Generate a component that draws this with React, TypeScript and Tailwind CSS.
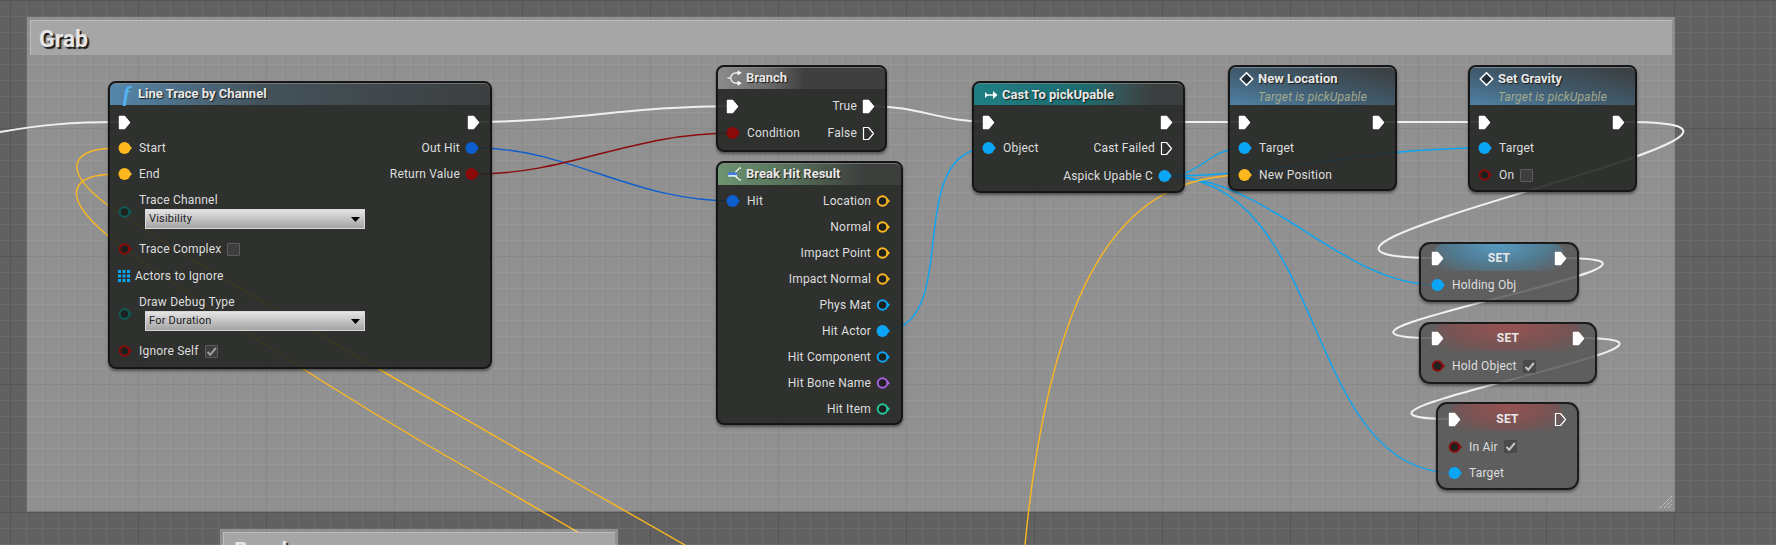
import React from 'react';

const BLUE = '#0aa5f5';
const YELLOW = '#fcb81e';
const RED = '#8c0a0a';
const TEAL = '#0b5c58';
const WIRE_BLUE = '#0d5fd0';

// exec pin, filled when connected
const ExecPin = ({ hollow = false }: { hollow?: boolean }) => (
  <svg width="13" height="15" viewBox="0 0 13 15" className="shrink-0">
    <path
      d="M1.5 1.5 H6.5 L11.5 7.5 L6.5 13.5 H1.5 Z"
      fill={hollow ? 'none' : '#fff'}
      stroke="#fff"
      strokeWidth={hollow ? 1.2 : 1.4}
      strokeLinejoin="round"
    />
  </svg>
);

const DataPin = ({ color, hollow = false }: { color: string; hollow?: boolean }) => (
  <svg width="15" height="14" viewBox="0 0 15 14" className="shrink-0">
    <path d="M12 5 L14 7 L12 9 Z" fill={color} />
    <circle cx="6.5" cy="7" r={hollow ? 4.8 : 6} fill={hollow ? '#1f211f' : color} stroke={hollow ? color : 'none'} strokeWidth={hollow ? 2 : 0} />
  </svg>
);

const CheckBox = ({ checked = false, flat = false }: { checked?: boolean; flat?: boolean }) => (
  <span
    className={`flex h-[13px] w-[13px] items-center justify-center rounded-[1px] border ${
      flat ? 'border-[#4a4a4a] bg-[#4a4a4a]' : 'border-[#5c5c5c] bg-[#3c3e3c]'
    }`}
  >
    {checked && (
      <svg width="11" height="11" viewBox="0 0 11 11">
        <path d="M1.5 6 L4.2 8.8 L9.8 2" fill="none" stroke={flat ? '#c8c8c8' : '#9c9c9c'} strokeWidth="2" />
      </svg>
    )}
  </span>
);

const Dropdown = ({ value }: { value: string }) => (
  <div className="ml-[6px] flex h-[20px] w-[220px] items-center justify-between border border-[#d8d8d8] bg-gradient-to-b from-[#e4e4e4] to-[#a4a4a4] pl-[3px] pr-[4px] text-[11px] text-[#1c1c1c]">
    <span>{value}</span>
    <svg width="9" height="5" viewBox="0 0 9 5">
      <path d="M0 0 H9 L4.5 5 Z" fill="#000" />
    </svg>
  </div>
);

const Row = ({ className, children }: { className: string; children: React.ReactNode }) => (
  <div className={`flex items-center justify-between text-[12px] tracking-[0.2px] text-[#dedede] ${className}`}>{children}</div>
);

const Left = ({ children }: { children: React.ReactNode }) => <div className="flex items-center gap-[6px]">{children}</div>;
const Right = ({ children }: { children: React.ReactNode }) => <div className="flex items-center gap-[5px]">{children}</div>;

const Node = ({
  className,
  header,
  title,
  subtitle,
  icon,
  bodyClass,
  children,
}: {
  className: string;
  header: string;
  title: string;
  subtitle?: string;
  icon: React.ReactNode;
  bodyClass: string;
  children: React.ReactNode;
}) => (
  <div className={`absolute rounded-[8px] border-2 border-[#141514] bg-[#212321]/[0.88] shadow-[0_2px_3px_rgba(0,0,0,0.45)] ${className}`}>
    <div className={`rounded-t-[6px] border-t border-[#8a8f92]/60 pl-[9px] ${header}`}>
      <div className="flex h-[20px] items-center gap-[4px]">
        <span className="flex w-[15px] justify-center">{icon}</span>
        <span className="text-[13px] font-bold text-[#e8e8e8] [text-shadow:1px_1px_1px_#1a1a1a]">{title}</span>
      </div>
      {subtitle && <div className="-mt-[1px] pl-[19px] text-[12px] italic tracking-[0.2px] text-[#a3a98a]">{subtitle}</div>}
    </div>
    <div className={`pl-[8px] pr-[10px] ${bodyClass}`}>{children}</div>
  </div>
);

const SetNode = ({
  className,
  glow,
  children,
}: {
  className: string;
  glow: string;
  children: React.ReactNode;
}) => (
  <div className={`absolute rounded-[11px] border-2 border-[#1b1b1b] bg-[#515151]/80 px-[10px] shadow-[0_2px_3px_rgba(0,0,0,0.4)] ${className}`}>
    <div className={`absolute inset-x-[14px] top-0 h-[27px] rounded-t-[8px] opacity-85 ${glow}`} />
    <div className="relative">{children}</div>
  </div>
);

const DiamondIcon = () => (
  <svg width="18" height="18" viewBox="0 0 18 18">
    <path d="M9 1.5 L16.5 9 L9 16.5 L1.5 9 Z" fill="#22303a" stroke="#fff" strokeWidth="2" strokeLinejoin="round" />
  </svg>
);

const BranchIcon = () => (
  <svg width="16" height="16" viewBox="0 0 16 16" fill="none" stroke="#fff" strokeWidth="1.3">
    <path d="M13 2.5 H9.5 A5.5 5.5 0 0 0 9.5 13.5 H13" />
    <path d="M0.5 8 H3.5" />
    <path d="M12 1 L14.5 2.5 L12 4 Z M12 12 L14.5 13.5 L12 15 Z" fill="#fff" />
  </svg>
);

const BreakIcon = () => (
  <svg width="16" height="16" viewBox="0 0 16 16" fill="none">
    <rect x="1" y="6" width="10" height="4.5" rx="2" fill="#3f7fe0" />
    <rect x="1" y="9" width="10" height="2" rx="1" fill="#d9e6f5" />
    <path d="M9 6 L13 2 M9 10.5 L13 14" stroke="#fff" strokeWidth="1.4" />
    <path d="M12 1 H15 V3 Z M12 15 H15 V13 Z" fill="#fff" />
  </svg>
);

const CastIcon = () => (
  <svg width="14" height="10" viewBox="0 0 14 10">
    <path d="M1 2 L4 5 L1 8 Z M9 1 L13.5 5 L9 9 Z" fill="#fff" />
    <path d="M3 5 H10" stroke="#fff" strokeWidth="1.4" />
  </svg>
);

const ArrayIcon = () => (
  <svg width="12" height="12" viewBox="0 0 12 12" fill={BLUE} className="shrink-0">
    <path d="M0 0h3v3H0z M4.5 0h3v3h-3z M9 0h3v3H9z M0 4.5h3v3H0z M4.5 4.5h3v3h-3z M9 4.5h3v3H9z M0 9h3v3H0z M4.5 9h3v3h-3z M9 9h3v3H9z" />
  </svg>
);

const Wires = () => (
  <svg className="absolute left-0 top-0" width="1776" height="545" fill="none" strokeLinecap="round">
    {/* exec */}
    <g stroke="#f0f0f0" strokeWidth="2">
      <path d="M0 132 C 40 125, 70 122, 120 122" />
      <path d="M476 122 C 570 122, 630 106, 734 106" />
      <path d="M869 106 C 920 106, 940 122, 989 122" />
      <path d="M1168 122 H1246" />
      <path d="M1380 122 H1486" />
      <path d="M1625 122 C 1885 122, 1177 258, 1437 258" />
      <path d="M1559 258 C 1749 258, 1247 338, 1437 338" />
      <path d="M1577 338 C 1763 338, 1268 419, 1454 419" />
    </g>
    {/* data */}
    <g strokeWidth="1.4">
      <path d="M476 148 C 570 148, 630 201, 734 201" stroke={WIRE_BLUE} />
      <path d="M476 174 C 570 174, 630 133, 734 133" stroke={RED} />
      <path d="M882 331 C 965 331, 900 148, 989 148" stroke={BLUE} />
      <path d="M1164 176 C 1205 176, 1205 148, 1246 148" stroke={BLUE} />
      <path d="M1164 176 C 1290 176, 1350 148, 1486 148" stroke={BLUE} />
      <path d="M1164 176 C 1270 176, 1340 285, 1437 285" stroke={BLUE} />
      <path d="M1164 176 C 1330 176, 1300 473, 1454 473" stroke={BLUE} />
      <path d="M1246 175 C 1150 175, 1055 230, 1025 545" stroke={YELLOW} />
      <path d="M118 148 C 70 148, 62 170, 105 203 C 190 262, 320 335, 571 480 L 685 545" stroke={YELLOW} />
      <path d="M118 174 C 70 174, 60 195, 107 235 C 180 290, 320 385, 488 480 L 600 545" stroke={YELLOW} />
    </g>
  </svg>
);

export default function App() {
  return (
    <div className="relative h-[545px] w-[1776px] overflow-hidden bg-[#616161] bg-[linear-gradient(to_right,#555555_1px,transparent_1px),linear-gradient(to_bottom,#555555_1px,transparent_1px),linear-gradient(to_right,#6a6a6a_1px,transparent_1px),linear-gradient(to_bottom,#6a6a6a_1px,transparent_1px)] bg-[size:128px_128px,128px_128px,16px_16px,16px_16px] bg-[position:10px_0,0_0,10px_0,0_0] font-['Roboto',sans-serif]">
      {/* Grab comment box */}
      <div className="absolute left-[27px] top-[17px] h-[495px] w-[1648px] border-b border-[#7a7a7a] bg-white/30 p-[3px]">
        <div className="h-[35px] w-[1642px] border-l border-t border-[#bdbdbd] bg-[#a6a6a6] pl-[8px] text-[23px] font-bold leading-[38px] text-[#e6e6e6] [text-shadow:2px_2px_1px_#1c1c1c]">
          Grab
        </div>
        <svg className="absolute bottom-[2px] right-[2px]" width="14" height="14" viewBox="0 0 14 14" stroke="#dcdcdc" strokeWidth="1" strokeDasharray="1 1">
          <path d="M1 13 L13 1 M5 13 L13 5 M9 13 L13 9" />
        </svg>
      </div>

      <Wires />

      {/* next comment box, cut off by the window */}
      <div className="absolute left-[220px] top-[529px] h-[40px] w-[398px] bg-white/30 p-[3px]">
        <div className="h-[35px] border-l border-t border-[#bdbdbd] bg-[#a6a6a6] pl-[10px] text-[23px] font-bold leading-[38px] text-[#e6e6e6] [text-shadow:2px_2px_1px_#1c1c1c]">
          Break
        </div>
      </div>

      <Node
        className="left-[108px] top-[81px] h-[288px] w-[384px]"
        header="h-[22px] bg-gradient-to-r from-[#5587ac] via-[#43525a] via-[40%] to-[#3d3f40]"
        title="Line Trace by Channel"
        icon={<span className="font-['Liberation_Serif',serif] text-[22px] font-bold italic leading-[20px] text-[#52b4f2]">f</span>}
        bodyClass="pt-[4px]"
      >
        <Row className="h-[26px]">
          <ExecPin />
          <ExecPin />
        </Row>
        <Row className="h-[26px]">
          <Left>
            <DataPin color={YELLOW} />
            Start
          </Left>
          <Right>
            Out Hit
            <DataPin color={WIRE_BLUE} />
          </Right>
        </Row>
        <Row className="h-[26px]">
          <Left>
            <DataPin color={YELLOW} />
            End
          </Left>
          <Right>
            Return Value
            <DataPin color={RED} />
          </Right>
        </Row>
        <Row className="h-[49px]">
          <Left>
            <DataPin color={TEAL} hollow />
            <div className="mb-[3px]">
              <div className="h-[18px] leading-[18px]">Trace Channel</div>
              <Dropdown value="Visibility" />
            </div>
          </Left>
        </Row>
        <Row className="h-[26px]">
          <Left>
            <DataPin color={RED} hollow />
            Trace Complex
            <CheckBox />
          </Left>
        </Row>
        <Row className="h-[27px]">
          <div className="flex items-center gap-[5px]">
            <ArrayIcon />
            Actors to Ignore
          </div>
        </Row>
        <Row className="h-[49px]">
          <Left>
            <DataPin color={TEAL} hollow />
            <div className="mb-[3px]">
              <div className="h-[18px] leading-[18px]">Draw Debug Type</div>
              <Dropdown value="For Duration" />
            </div>
          </Left>
        </Row>
        <Row className="h-[26px]">
          <Left>
            <DataPin color={RED} hollow />
            Ignore Self
            <CheckBox checked />
          </Left>
        </Row>
      </Node>

      <Node
        className="left-[716px] top-[65px] h-[87px] w-[171px]"
        header="h-[22px] bg-gradient-to-r from-[#8c8c8c] via-[#6a6a6a] via-[30%] to-[#3e3f3e] to-[52%]"
        title="Branch"
        icon={<BranchIcon />}
        bodyClass="pt-[4px]"
      >
        <Row className="h-[26px]">
          <ExecPin />
          <Right>
            True
            <ExecPin />
          </Right>
        </Row>
        <Row className="h-[28px]">
          <Left>
            <DataPin color={RED} />
            Condition
          </Left>
          <Right>
            False
            <ExecPin hollow />
          </Right>
        </Row>
      </Node>

      <Node
        className="left-[716px] top-[161px] h-[264px] w-[187px]"
        header="h-[22px] bg-gradient-to-r from-[#6c9470] via-[#56705a] via-[40%] to-[#3d3f3d] to-[80%]"
        title="Break Hit Result"
        icon={<BreakIcon />}
        bodyClass="pt-[3px]"
      >
        {[
          ['Location', YELLOW, true],
          ['Normal', YELLOW, true],
          ['Impact Point', YELLOW, true],
          ['Impact Normal', YELLOW, true],
          ['Phys Mat', BLUE, true],
          ['Hit Actor', BLUE, false],
          ['Hit Component', BLUE, true],
          ['Hit Bone Name', '#a45fe0', true],
          ['Hit Item', '#1fc79a', true],
        ].map(([label, color, hollow], i) => (
          <Row className="h-[26px]" key={label as string}>
            {i === 0 ? (
              <Left>
                <DataPin color={WIRE_BLUE} />
                Hit
              </Left>
            ) : (
              <span />
            )}
            <Right>
              {label as string}
              <DataPin color={color as string} hollow={hollow as boolean} />
            </Right>
          </Row>
        ))}
      </Node>

      <Node
        className="left-[972px] top-[81px] h-[112px] w-[213px]"
        header="h-[22px] pt-[1px] bg-gradient-to-r from-[#1f7f84] via-[#1d6a6e] via-[55%] to-[#3b3f3f] to-[85%]"
        title="Cast To pickUpable"
        icon={<CastIcon />}
        bodyClass="pt-[4px]"
      >
        <Row className="h-[26px]">
          <ExecPin />
          <ExecPin />
        </Row>
        <Row className="h-[26px]">
          <Left>
            <DataPin color={BLUE} />
            Object
          </Left>
          <Right>
            Cast Failed
            <ExecPin hollow />
          </Right>
        </Row>
        <Row className="h-[30px]">
          <span />
          <Right>
            Aspick Upable C
            <DataPin color={BLUE} />
          </Right>
        </Row>
      </Node>

      <Node
        className="left-[1228px] top-[65px] h-[126px] w-[169px]"
        header="h-[38px] pt-[1px] bg-gradient-to-tr from-[#4f81a6] via-[#40596a] via-[50%] to-[#3b3d3e]"
        title="New Location"
        subtitle="Target is pickUpable"
        icon={<DiamondIcon />}
        bodyClass="pt-[4px]"
      >
        <Row className="h-[26px]">
          <ExecPin />
          <ExecPin />
        </Row>
        <Row className="h-[26px]">
          <Left>
            <DataPin color={BLUE} />
            Target
          </Left>
        </Row>
        <Row className="h-[28px]">
          <Left>
            <DataPin color={YELLOW} />
            New Position
          </Left>
        </Row>
      </Node>

      <Node
        className="left-[1468px] top-[65px] h-[127px] w-[169px]"
        header="h-[38px] pt-[1px] bg-gradient-to-tr from-[#4f81a6] via-[#40596a] via-[50%] to-[#3b3d3e]"
        title="Set Gravity"
        subtitle="Target is pickUpable"
        icon={<DiamondIcon />}
        bodyClass="pt-[4px]"
      >
        <Row className="h-[26px]">
          <ExecPin />
          <ExecPin />
        </Row>
        <Row className="h-[26px]">
          <Left>
            <DataPin color={BLUE} />
            Target
          </Left>
        </Row>
        <Row className="h-[28px]">
          <Left>
            <DataPin color={RED} hollow />
            On
            <CheckBox />
          </Left>
        </Row>
      </Node>

      <SetNode
        className="left-[1419px] top-[242px] h-[60px] w-[160px]"
        glow="bg-[radial-gradient(ellipse_at_50%_0%,#55a6d6_0%,#4f7f98_55%,transparent_95%)]"
      >
        <Row className="h-[28px]">
          <ExecPin />
          <span className="font-bold text-[#e8e8e8]">SET</span>
          <ExecPin />
        </Row>
        <Row className="h-[26px]">
          <Left>
            <DataPin color={BLUE} />
            Holding Obj
          </Left>
        </Row>
      </SetNode>

      <SetNode
        className="left-[1419px] top-[322px] h-[62px] w-[178px]"
        glow="bg-[radial-gradient(ellipse_at_50%_0%,#a34f4f_0%,#7f5252_55%,transparent_95%)]"
      >
        <Row className="h-[28px]">
          <ExecPin />
          <span className="font-bold text-[#e8e8e8]">SET</span>
          <ExecPin />
        </Row>
        <Row className="h-[28px]">
          <Left>
            <DataPin color={RED} hollow />
            Hold Object
            <CheckBox checked flat />
          </Left>
        </Row>
      </SetNode>

      <SetNode
        className="left-[1436px] top-[402px] h-[88px] w-[143px]"
        glow="bg-[radial-gradient(ellipse_at_50%_0%,#a34f4f_0%,#7f5252_55%,transparent_95%)]"
      >
        <Row className="h-[30px]">
          <ExecPin />
          <span className="font-bold text-[#e8e8e8]">SET</span>
          <ExecPin hollow />
        </Row>
        <Row className="h-[25px]">
          <Left>
            <DataPin color={RED} hollow />
            In Air
            <CheckBox checked flat />
          </Left>
        </Row>
        <Row className="h-[27px]">
          <Left>
            <DataPin color={BLUE} />
            Target
          </Left>
        </Row>
      </SetNode>
    </div>
  );
}
